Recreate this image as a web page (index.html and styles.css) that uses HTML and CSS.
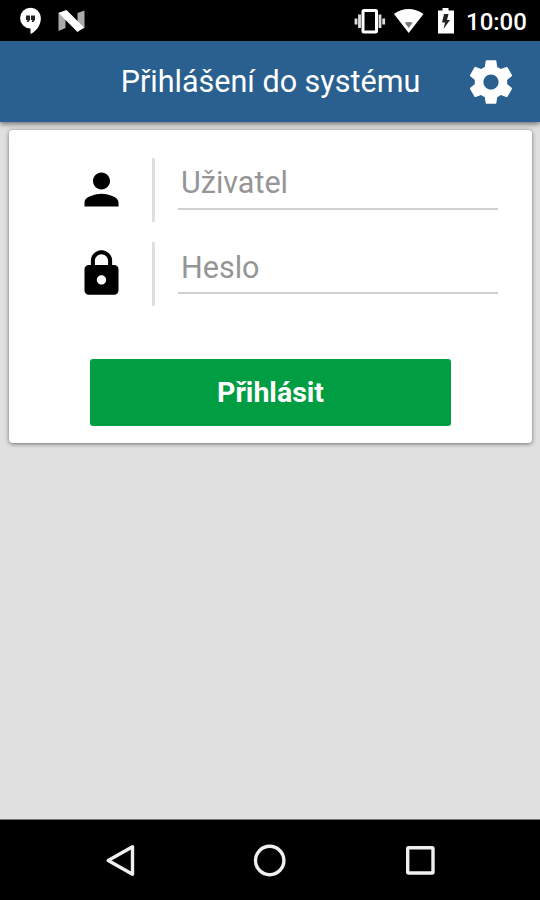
FILE: index.html
```
<!DOCTYPE html>
<html lang="cs">
<head>
<meta charset="utf-8">
<title>Přihlášení do systému</title>
<link rel="stylesheet" href="styles.css">
</head>
<body>
<div class="status">
  <svg class="hangouts" width="22" height="27" viewBox="0 0 22 27"><path fill="#fff" d="M11.500.8a10.300 10.300 0 0 0 0 20.800V27C17 24.500 21.900 18.500 21.900 11A10.300 10.300 0 0 0 11.500.8z"/><path fill="#222" d="M7 8.500h4v4.500L9.300 15H7.700l.8-2H7zM12 8.500h4v4.500L14.300 15h-1.600l.8-2H12z"/></svg>
  <svg class="nougat" width="28" height="24" viewBox="0 0 28 24"><path fill="#aaa" d="M.5 4l7-2.500V19l-7 3zM19.500 4l7-2.500V19l-7 3z"/><path fill="#fff" d="M.5 4l8-3L26 18.500 19.500 23z"/></svg>
  <svg class="vibrate" width="32" height="28" viewBox="0 0 32 28"><rect x="9" y="3.500" width="13.500" height="21.500" rx="1" fill="none" stroke="#fff" stroke-width="3"/><path fill="none" stroke="#ddd" stroke-width="2.800" d="M5.500 7.500v13.500M26 7.500v13.500M2 11.500v6M29.700 11.500v6"/></svg>
  <svg class="wifi" width="32" height="26" viewBox="0 0 32 26"><path fill="#fff" d="M1 6C10-.8 21-.8 30.500 6L15.700 25z"/><path fill="#777" d="M11.700 14.500q4-1 8 0L15.700 20z"/></svg>
  <svg class="battery" width="18" height="26" viewBox="0 0 18 26"><path fill="#fff" d="M5.500 0h6v2.500H17V25.500H1v-23h4.500z"/><path fill="#222" d="M11.500 6H7L5 14.500h3L6.500 21l6.500-9h-3z"/></svg>
  <span class="clock">10:00</span>
</div>
<header class="bar">
  <h1>Přihlášení do systému</h1>
  <svg class="gear" width="52" height="52" viewBox="0 0 24 24"><path fill="#fff" d="M19.430 12.980c.04-.32.070-.64.070-.98s-.03-.66-.07-.98l2.110-1.650c.19-.15.24-.42.120-.64l-2-3.460c-.12-.22-.39-.3-.61-.22l-2.490 1c-.52-.4-1.080-.73-1.690-.98l-.38-2.650C14.460 2.180 14.250 2 14 2h-4c-.25 0-.46.180-.49.420l-.38 2.650c-.61.250-1.170.59-1.690.98l-2.490-1c-.23-.09-.49 0-.61.220l-2 3.460c-.13.220-.07.490.120.640l2.110 1.650c-.04.320-.07.650-.07.980s.03.660.070.980l-2.110 1.650c-.19.150-.24.420-.12.640l2 3.460c.12.220.39.300.61.220l2.490-1c.52.400 1.080.730 1.690.980l.38 2.650c.03.240.24.420.49.420h4c.25 0 .46-.18.490-.42l.38-2.650c.61-.25 1.170-.59 1.690-.98l2.490 1c.23.090.49 0 .61-.22l2-3.460c.12-.22.070-.49-.12-.64l-2.110-1.650zM12 15.500c-1.930 0-3.500-1.570-3.500-3.500s1.570-3.500 3.500-3.500 3.500 1.570 3.500 3.500-1.570 3.500-3.500 3.500z"/></svg>
</header>
<main>
  <form class="card">
    <div class="row">
      <svg class="icon" width="51" height="51" viewBox="0 0 24 24"><path d="M12 12c2.210 0 4-1.790 4-4s-1.790-4-4-4-4 1.790-4 4 1.790 4 4 4zm0 2c-2.670 0-8 1.340-8 4v2h16v-2c0-2.660-5.330-4-8-4z"/></svg>
      <div class="divider"></div>
      <input type="text" placeholder="Uživatel">
    </div>
    <div class="row">
      <svg class="icon" width="51" height="51" viewBox="0 0 24 24"><path d="M18 8h-1V6c0-2.760-2.240-5-5-5S7 3.240 7 6v2H6c-1.100 0-2 .9-2 2v10c0 1.100.9 2 2 2h12c1.100 0 2-.9 2-2V10c0-1.100-.9-2-2-2zm-6 9.200c-1.200 0-2.200-1-2.200-2.200s1-2.200 2.200-2.200 2.200 1 2.200 2.200-1 2.200-2.200 2.200zm3.100-9.200H8.900V6c0-1.710 1.390-3.100 3.100-3.100s3.100 1.390 3.100 3.100v2z"/></svg>
      <div class="divider"></div>
      <input class="password" type="password" placeholder="Heslo">
    </div>
    <button type="button">Přihlásit</button>
  </form>
</main>
<nav class="nav">
  <svg width="36" height="36" viewBox="0 0 36 36"><path d="M31.500 3.700v27.600L7.200 17.500z"/></svg>
  <svg width="36" height="36" viewBox="0 0 36 36"><circle cx="17.700" cy="17.500" r="14.200"/></svg>
  <svg width="36" height="36" viewBox="0 0 36 36"><rect x="5.700" y="4.700" width="25.300" height="25.300" rx="1"/></svg>
</nav>
</body>
</html>
```
FILE: styles.css
```
* { box-sizing: border-box; }
body {
  margin: 0;
  width: 540px;
  height: 900px;
  display: flex;
  flex-direction: column;
  background: #e0e0e0;
  font-family: Roboto, sans-serif;
  overflow: hidden;
}
svg { display: block; flex: none; }
.status {
  height: 41px;
  flex: none;
  background: #000;
  display: flex;
  align-items: center;
  padding: 0 14px 0 19px;
}
.nougat { margin-left: 17px; }
.vibrate { margin-left: auto; }
.wifi { margin-left: 7px; margin-right: 12px; }
.battery { margin-right: 11px; }
.clock {
  color: #fff;
  font-size: 24px;
  font-weight: 500;
  line-height: 28px;
  width: 60px;
  margin-top: 2px;
  white-space: nowrap;
}
.bar {
  height: 81px;
  flex: none;
  background: #29608f;
  display: grid;
  grid-template-columns: 1fr 52px;
  align-items: center;
  padding: 0 23px 0 76px;
  box-shadow: 0 2px 5px rgba(0, 0, 0, .5);
}
h1 {
  margin: 0;
  color: #fff;
  font-size: 30.5px;
  font-weight: 400;
  line-height: 36px;
  text-align: center;
  white-space: nowrap;
}
main { flex: 1; padding: 8px 8px 0 9px; }
.card {
  height: 313px;
  background: #fff;
  border-radius: 4px;
  box-shadow: 0 1px 4px rgba(0, 0, 0, .5);
  padding: 28px 34px 0 67px;
  margin: 0;
}
.row {
  height: 64px;
  display: flex;
  margin-bottom: 20px;
}
.icon { margin-top: 6px; fill: #000; }
.divider {
  width: 3px;
  margin: 0 23px 0 25px;
  background: #dedede;
}
input {
  flex: 1;
  min-width: 0;
  height: 52px;
  padding: 0 3px 1px;
  border: 0;
  border-bottom: 2px solid #d0d0d0;
  background: none;
  outline: 0;
  font: 400 30.5px Roboto, sans-serif;
}
.password { padding-top: 1px; padding-bottom: 0; }
input::placeholder { color: #959595; opacity: 1; }
button {
  display: block;
  width: 361px;
  height: 67px;
  margin: 53px 0 0 14px;
  padding: 0;
  border: 0;
  border-radius: 3px;
  background: #009d42;
  color: #fff;
  font: 700 28.5px Roboto, sans-serif;
}
.nav {
  height: 81px;
  flex: none;
  background: #000;
  border-top: 1px solid #777;
  display: flex;
  justify-content: space-between;
  padding: 23px 102px 0 101px;
}
.nav svg { fill: none; stroke: #f0f0f0; stroke-width: 3.400; stroke-linejoin: round; }
```
